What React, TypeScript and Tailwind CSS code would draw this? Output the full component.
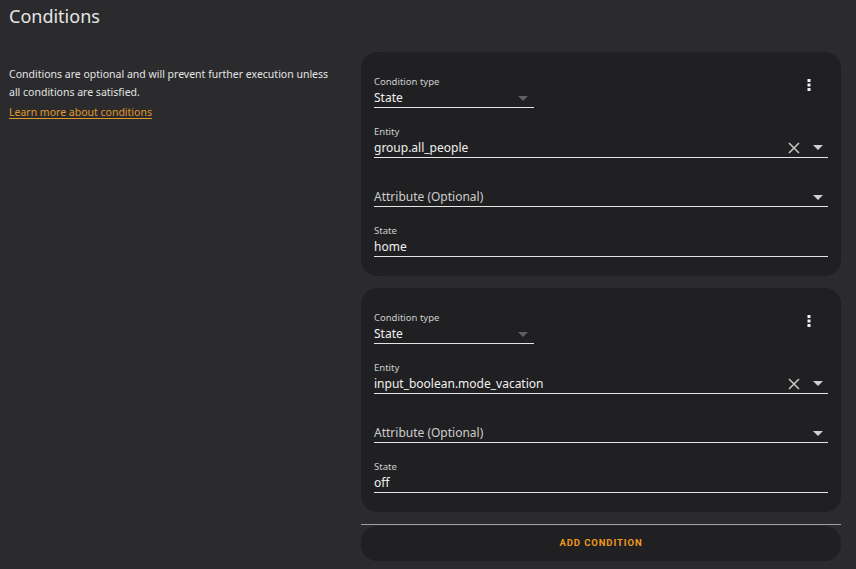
import { ReactNode } from 'react'

// ── small icons ──────────────────────────────────────────────────────────────

function DropArrow({ dim = false }: { dim?: boolean }) {
  return (
    <svg width="10" height="5" viewBox="0 0 10 5" className="shrink-0">
      <path d="M0 0 L10 0 L5 5 Z" fill={dim ? '#5f5f61' : '#d0d0d0'} />
    </svg>
  )
}

function ClearIcon() {
  return (
    <svg width="12" height="12" viewBox="0 0 12 12" className="shrink-0">
      <path d="M1 1 L11 11 M11 1 L1 11" stroke="#c4c4c4" strokeWidth="1.6" />
    </svg>
  )
}

function DotsIcon() {
  return (
    <svg width="4" height="12" viewBox="0 0 4 12">
      <rect x="0.5" y="0" width="3" height="3" fill="#f0f0f0" />
      <rect x="0.5" y="4.5" width="3" height="3" fill="#f0f0f0" />
      <rect x="0.5" y="9" width="3" height="3" fill="#f0f0f0" />
    </svg>
  )
}

// ── field ────────────────────────────────────────────────────────────────────

function Field({
  label,
  value,
  placeholder,
  trailing,
  className = '',
}: {
  label?: string
  value?: string
  placeholder?: string
  trailing?: ReactNode
  className?: string
}) {
  return (
    <div className={`border-b border-[#e4e4e4] ${className}`}>
      <div className="h-[15px] pt-[1px] text-[9.5px] leading-[14px] text-[#cfcfcf]">{label}</div>
      <div className="flex items-center h-[18px]">
        {value ? (
          <span className="flex-1 text-[12px] leading-[18px] text-[#f0f0f0]">{value}</span>
        ) : (
          <span className="flex-1 text-[12px] leading-[18px] text-[#cdcdcd]">{placeholder}</span>
        )}
        {trailing}
      </div>
    </div>
  )
}

function ConditionCard({ entity, state }: { entity: string; state: string }) {
  return (
    <div className="bg-[#202022] rounded-[16px] px-[13px] pt-[22px] pb-[19.5px] flex flex-col gap-[15.5px]">
      <div className="flex items-start justify-between">
        <Field
          label="Condition type"
          value="State"
          className="w-[160px]"
          trailing={<span className="mr-[6px] mt-[1px]"><DropArrow dim /></span>}
        />
        <button className="w-[24px] h-[24px] mr-[7px] mt-[-1px] flex items-center justify-center">
          <DotsIcon />
        </button>
      </div>
      <Field
        label="Entity"
        value={entity}
        trailing={
          <div className="flex items-center gap-[13px] mr-[5px]">
            <ClearIcon />
            <DropArrow />
          </div>
        }
      />
      <Field
        placeholder="Attribute (Optional)"
        trailing={<span className="mr-[5px]"><DropArrow /></span>}
      />
      <Field label="State" value={state} />
    </div>
  )
}

// ── page ─────────────────────────────────────────────────────────────────────

export default function App() {
  return (
    <div
      className="w-[856px] h-[569px] bg-[#2b2b2d] overflow-hidden text-[#e1e1e1]"
      style={{ fontFamily: '"Noto Sans", "Open Sans", sans-serif' }}
    >
      <h1 className="pl-[9px] pt-[2px] text-[18px] leading-[28px] font-normal text-[#e6e6e6]">Conditions</h1>

      <div className="flex pt-[22px]">
        {/* description */}
        <div className="w-[361px] pl-[9px] pr-[20px] pt-[13px]">
          <p className="text-[10.5px] leading-[18px] text-[#e4e4e4]">
            Conditions are optional and will prevent further execution unless all conditions are satisfied.
          </p>
          <a className="block w-fit text-[10.5px] leading-[16px] mt-[3px] text-[#e09a2c] underline underline-offset-2">
            Learn more about conditions
          </a>
        </div>

        {/* conditions list */}
        <div className="w-[480px] flex flex-col">
          <ConditionCard entity="group.all_people" state="home" />
          <div className="h-[12px]" />
          <ConditionCard entity="input_boolean.mode_vacation" state="off" />
          <div className="h-[12px]" />
          <div className="h-px bg-[#a0a0a0]" />
          <button
            className="mt-[1px] h-[35px] bg-[#202022] rounded-[16px] text-[9.5px] font-bold tracking-[0.9px] text-[#f0981e]"
            style={{ fontFamily: 'Roboto, sans-serif' }}
          >
            ADD CONDITION
          </button>
        </div>
      </div>
    </div>
  )
}
